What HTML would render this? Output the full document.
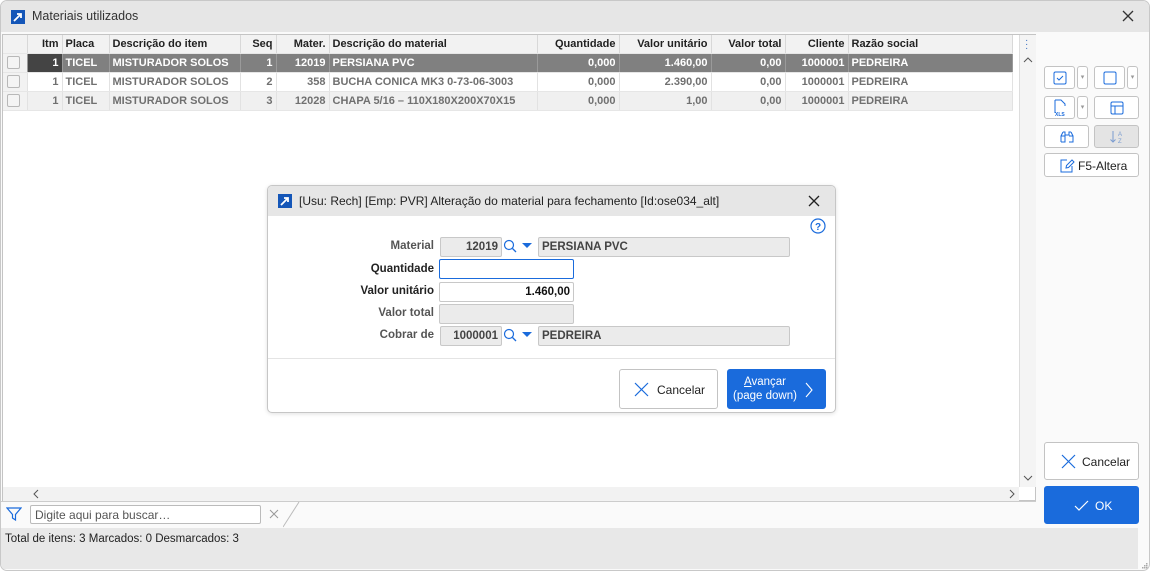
<!DOCTYPE html>
<html><head><meta charset="utf-8"><style>
*{box-sizing:border-box;margin:0;padding:0}
body{width:1150px;height:571px;background:#fff;font-family:"Liberation Sans",sans-serif;position:relative;overflow:hidden}
.abs{position:absolute}
#win{left:0;top:0;width:1150px;height:571px;border:1px solid #c8c8c8;border-radius:7px;background:#fafafa;overflow:hidden}
#tb{left:0;top:0;width:1150px;height:31px;background:#e6e6e6}
.ico{width:14px;height:14px;background:#1456b8}
#grid{left:1px;top:33px;width:1034px;height:467px;border:1px solid #c4c4c4;background:#fff}
table{border-collapse:collapse;font-size:11px;font-weight:bold;position:absolute;left:0;top:0;table-layout:fixed}
td{height:19px;padding:0 3px;border-right:1px solid #e2e2e2;border-bottom:1px solid #e6e6e6;white-space:nowrap;overflow:hidden;color:#707070}
thead td{background:#f2f2f2;color:#222;border-right:1px solid #d8d8d8;height:18px}
.r{text-align:right}
tr.sel td{background:#808080;color:#fff;border-right:1px solid #9a9a9a}
tr.sel td.d{background:#444}
tr.alt td{background:#f0f0f0}
.cb{display:inline-block;width:13px;height:13px;border:1px solid #b8b8b8;border-radius:2px;background:#f4f4f4;vertical-align:middle}
td.c{background:#f2f2f2!important;padding:0 4px}
.btn{position:absolute;border:1px solid #c3c3c3;border-radius:3px;background:#fff}
.lbl{position:absolute;right:716px;font-size:11.5px;font-weight:bold;color:#555;text-align:right}
.fld{position:absolute;height:20px;border:1px solid #c8c8c8;border-radius:2px;background:#ebebeb;font-size:11.5px;font-weight:bold;color:#444;line-height:18px;padding:0 3px}
</style></head><body>
<div id="win" class="abs">
<div id="tb" class="abs"></div>
<div class="abs ico" style="left:10px;top:9px"><svg width="14" height="14"><path d="M3 11L10 4M6 4h4v4" stroke="#fff" stroke-width="1.8" fill="none"/></svg></div>
<div class="abs" style="left:31px;top:8px;font-size:12.5px;color:#333">Materiais utilizados</div>
<svg class="abs" style="left:1121px;top:9px" width="12" height="12"><path d="M1 1L11 11M11 1L1 11" stroke="#333" stroke-width="1.3"/></svg>

<div id="grid" class="abs">
<table>
<colgroup><col style="width:24px"><col style="width:35px"><col style="width:47px"><col style="width:131px"><col style="width:36px"><col style="width:53px"><col style="width:208px"><col style="width:82px"><col style="width:92px"><col style="width:74px"><col style="width:63px"><col style="width:164px"></colgroup>
<thead><tr><td></td><td class="r">Itm</td><td>Placa</td><td>Descrição do item</td><td class="r">Seq</td><td class="r">Mater.</td><td>Descrição do material</td><td class="r">Quantidade</td><td class="r">Valor unitário</td><td class="r">Valor total</td><td class="r">Cliente</td><td>Razão social</td></tr></thead>
<tbody>
<tr class="sel"><td class="c"><span class="cb"></span></td><td class="r d">1</td><td>TICEL</td><td>MISTURADOR SOLOS</td><td class="r">1</td><td class="r">12019</td><td>PERSIANA PVC</td><td class="r">0,000</td><td class="r">1.460,00</td><td class="r">0,00</td><td class="r">1000001</td><td>PEDREIRA</td></tr>
<tr><td class="c"><span class="cb"></span></td><td class="r">1</td><td>TICEL</td><td>MISTURADOR SOLOS</td><td class="r">2</td><td class="r">358</td><td>BUCHA CONICA MK3 0-73-06-3003</td><td class="r">0,000</td><td class="r">2.390,00</td><td class="r">0,00</td><td class="r">1000001</td><td>PEDREIRA</td></tr>
<tr class="alt"><td class="c"><span class="cb"></span></td><td class="r">1</td><td>TICEL</td><td>MISTURADOR SOLOS</td><td class="r">3</td><td class="r">12028</td><td>CHAPA 5/16 – 110X180X200X70X15</td><td class="r">0,000</td><td class="r">1,00</td><td class="r">0,00</td><td class="r">1000001</td><td>PEDREIRA</td></tr>
</tbody></table>
<div class="abs" style="left:1016px;top:0;width:17px;height:452px;background:#f4f4f4;border-left:1px solid #ddd"></div>
<div class="abs" style="left:1022px;top:4px;color:#3a6fc0;font-size:10px;line-height:4px">·<br>·<br>·</div>
<svg class="abs" style="left:1019px;top:20px" width="12" height="10"><path d="M2 7L6 3L10 7" stroke="#555" fill="none"/></svg>
<svg class="abs" style="left:1019px;top:438px" width="12" height="10"><path d="M2 3L6 7L10 3" stroke="#555" fill="none"/></svg>
<div class="abs" style="left:0;top:452px;width:1016px;height:14px;background:#f2f2f2"></div>
<svg class="abs" style="left:28px;top:453px" width="10" height="12"><path d="M7 2L3 6L7 10" stroke="#555" fill="none"/></svg>
<svg class="abs" style="left:1004px;top:453px" width="10" height="12"><path d="M3 2L7 6L3 10" stroke="#555" fill="none"/></svg>
</div>

<div class="abs" style="left:0;top:500px;width:1035px;height:27px;background:#fafafa;border-top:1px solid #ccc"></div>
<svg class="abs" style="left:5px;top:505px" width="16" height="16"><path d="M1 2H15L9.5 8.5V14L6.5 12V8.5Z" stroke="#1a6bdc" stroke-width="1.2" fill="none"/></svg>
<div class="abs" style="left:29px;top:504px;width:231px;height:19px;border:1px solid #bbb;border-radius:2px;background:#fff;font-size:12px;color:#555;padding:2px 4px">Digite aqui para buscar…</div>
<svg class="abs" style="left:268px;top:508px" width="10" height="10"><path d="M1 1L9 9M9 1L1 9" stroke="#999"/></svg>
<svg class="abs" style="left:282px;top:500px" width="18" height="27"><path d="M0 26L16 1" stroke="#bbb"/></svg>
<div class="abs" style="left:0;top:527px;width:1137px;height:41px;background:#e8e8e8"></div>
<div class="abs" style="left:4px;top:532px;font-size:11.5px;color:#222">Total de itens: 3 Marcados: 0 Desmarcados: 3</div>

<div class="btn" style="left:1043px;top:65px;width:31px;height:23px"><svg style="margin:4px 8px" width="14" height="14"><rect x="1" y="1" width="12" height="12" rx="1.5" stroke="#1a6bdc" fill="none"/><path d="M4 7L6 9L10 5" stroke="#1a6bdc" fill="none"/></svg></div>
<div class="btn" style="left:1076px;top:65px;width:11px;height:23px;font-size:7px;color:#999;text-align:center;line-height:21px">▾</div>
<div class="btn" style="left:1093px;top:65px;width:31px;height:23px"><svg style="margin:4px 8px" width="14" height="14"><rect x="1" y="1" width="12" height="12" rx="1.5" stroke="#1a6bdc" fill="none"/></svg></div>
<div class="btn" style="left:1126px;top:65px;width:11px;height:23px;font-size:7px;color:#999;text-align:center;line-height:21px">▾</div>
<div class="btn" style="left:1043px;top:95px;width:31px;height:23px"><svg style="margin:2px 8px" width="14" height="18"><path d="M2 1H8L12 5V7M2 1V14" stroke="#1a6bdc" fill="none"/><text x="2" y="17" font-size="5" font-family="Liberation Sans" font-weight="bold" fill="#1a6bdc">XLS</text></svg></div>
<div class="btn" style="left:1076px;top:95px;width:11px;height:23px;font-size:7px;color:#999;text-align:center;line-height:21px">▾</div>
<div class="btn" style="left:1093px;top:95px;width:45px;height:23px"><svg style="margin:4px 15px" width="14" height="14"><rect x="1" y="1" width="12" height="12" rx="1.5" stroke="#1a6bdc" fill="none"/><path d="M1 5H13M5 5V13" stroke="#1a6bdc"/></svg></div>
<div class="btn" style="left:1043px;top:124px;width:45px;height:23px"><svg style="margin:4px 15px" width="14" height="14"><path d="M3 2h2v3h4V2h2M1 12V6l2-4M13 12V6l-2-4M1 12h4V6H1M9 12h4V6H9" stroke="#1a6bdc" fill="none"/></svg></div>
<div class="btn" style="left:1093px;top:124px;width:45px;height:23px;background:#e4e4e4"><svg style="margin:3px 14px" width="16" height="16"><path d="M4 2V13M1.5 10.5L4 13L6.5 10.5" stroke="#7a9cd0" fill="none"/><text x="9" y="7" font-size="6" fill="#7a9cd0" font-family="Liberation Sans">A</text><text x="9" y="14" font-size="6" fill="#7a9cd0" font-family="Liberation Sans">Z</text></svg></div>
<div class="btn" style="left:1043px;top:152px;width:95px;height:24px;font-size:12px;color:#222"><svg class="abs" style="left:14px;top:4px" width="16" height="16"><path d="M8 2H2V14H13V8M7 10L7.5 7.5L13 2L15 4L9.5 9.5Z" stroke="#1a6bdc" fill="none"/></svg><span class="abs" style="left:33px;top:5px">F5-Altera</span></div>
<div class="btn" style="left:1043px;top:441px;width:95px;height:38px;font-size:12px;color:#222"><svg class="abs" style="left:16px;top:11px" width="15" height="15"><path d="M1 1L14 14M14 1L1 14" stroke="#1a6bdc" stroke-width="1.2"/></svg><span class="abs" style="left:37px;top:12px">Cancelar</span></div>
<div class="btn" style="left:1043px;top:485px;width:95px;height:38px;background:#1a6bdc;border-color:#1a6bdc;font-size:12px;color:#fff"><svg class="abs" style="left:29px;top:12px" width="16" height="14"><path d="M1 7L5 11L14 2" stroke="#fff" stroke-width="1.2" fill="none"/></svg><span class="abs" style="left:50px;top:12px">OK</span></div>
<svg class="abs" style="left:1140px;top:561px" width="8" height="8"><g fill="#aaa"><rect x="5" y="1" width="1.5" height="1.5"/><rect x="3" y="3" width="1.5" height="1.5"/><rect x="5" y="3" width="1.5" height="1.5"/><rect x="1" y="5" width="1.5" height="1.5"/><rect x="3" y="5" width="1.5" height="1.5"/><rect x="5" y="5" width="1.5" height="1.5"/></g></svg>
</div>

<div class="abs" style="left:267px;top:185px;width:569px;height:228px;border:1px solid #c6c6c6;border-radius:5px;background:#fff;overflow:hidden;box-shadow:0 1px 4px rgba(0,0,0,.12)">
<div class="abs" style="left:0;top:0;width:569px;height:30px;background:#e6e6e6"></div>
<div class="abs ico" style="left:10px;top:8px"><svg width="14" height="14"><path d="M3 11L10 4M6 4h4v4" stroke="#fff" stroke-width="1.8" fill="none"/></svg></div>
<div class="abs" style="left:31px;top:8px;font-size:12px;color:#222">[Usu: Rech] [Emp: PVR] Alteração do material para fechamento [Id:ose034_alt]</div>
<svg class="abs" style="left:540px;top:9px" width="12" height="12"><path d="M1 1L11 11M11 1L1 11" stroke="#222" stroke-width="1.3"/></svg>
<svg class="abs" style="left:542px;top:32px" width="16" height="16"><circle cx="8" cy="8" r="7" stroke="#1a6bdc" stroke-width="1.2" fill="none"/><text x="8" y="12" text-anchor="middle" font-size="10" font-weight="bold" fill="#1a6bdc" font-family="Liberation Sans">?</text></svg>
<div class="abs" style="left:0;top:172px;width:569px;height:1px;background:#e4e4e4"></div>
</div>
<div class="lbl" style="top:240px">Material</div>
<div class="lbl" style="top:263px;color:#222">Quantidade</div>
<div class="lbl" style="top:285px;color:#222">Valor unitário</div>
<div class="lbl" style="top:307px">Valor total</div>
<div class="lbl" style="top:329px">Cobrar de</div>
<div class="fld" style="left:440px;top:237px;width:62px;text-align:right">12019</div>
<svg class="abs" style="left:503px;top:239px" width="14" height="14"><circle cx="6" cy="6" r="4.5" stroke="#1a6bdc" stroke-width="1.2" fill="none"/><path d="M9.5 9.5L13 13" stroke="#1a6bdc" stroke-width="1.3"/></svg>
<svg class="abs" style="left:522px;top:243px" width="10" height="6"><path d="M0 0H10L5 5Z" fill="#1a6bdc"/></svg>
<div class="fld" style="left:538px;top:237px;width:252px">PERSIANA PVC</div>
<div class="fld" style="left:439px;top:259px;width:135px;background:#fff;border-color:#1a6bdc"></div>
<div class="fld" style="left:439px;top:282px;width:135px;background:#fff;color:#111;text-align:right">1.460,00</div>
<div class="fld" style="left:439px;top:304px;width:135px"></div>
<div class="fld" style="left:440px;top:326px;width:62px;text-align:right">1000001</div>
<svg class="abs" style="left:503px;top:328px" width="14" height="14"><circle cx="6" cy="6" r="4.5" stroke="#1a6bdc" stroke-width="1.2" fill="none"/><path d="M9.5 9.5L13 13" stroke="#1a6bdc" stroke-width="1.3"/></svg>
<svg class="abs" style="left:522px;top:332px" width="10" height="6"><path d="M0 0H10L5 5Z" fill="#1a6bdc"/></svg>
<div class="fld" style="left:538px;top:326px;width:252px">PEDREIRA</div>
<div class="btn" style="left:619px;top:369px;width:99px;height:40px;font-size:12px;color:#222"><svg class="abs" style="left:14px;top:12px" width="15" height="15"><path d="M1 1L14 14M14 1L1 14" stroke="#1a6bdc" stroke-width="1.2"/></svg><span class="abs" style="left:37px;top:13px">Cancelar</span></div>
<div class="btn" style="left:727px;top:369px;width:99px;height:40px;background:#1a6bdc;border-color:#1a6bdc;font-size:11.5px;color:#fff;line-height:14px"><span class="abs" style="left:2px;top:5px;text-align:center;width:70px;white-space:nowrap"><u>A</u>vançar<br>(page down)</span><svg class="abs" style="left:76px;top:12px" width="10" height="16"><path d="M2 1L8 8L2 15" stroke="#fff" stroke-width="1.1" fill="none"/></svg></div>
</body></html>
